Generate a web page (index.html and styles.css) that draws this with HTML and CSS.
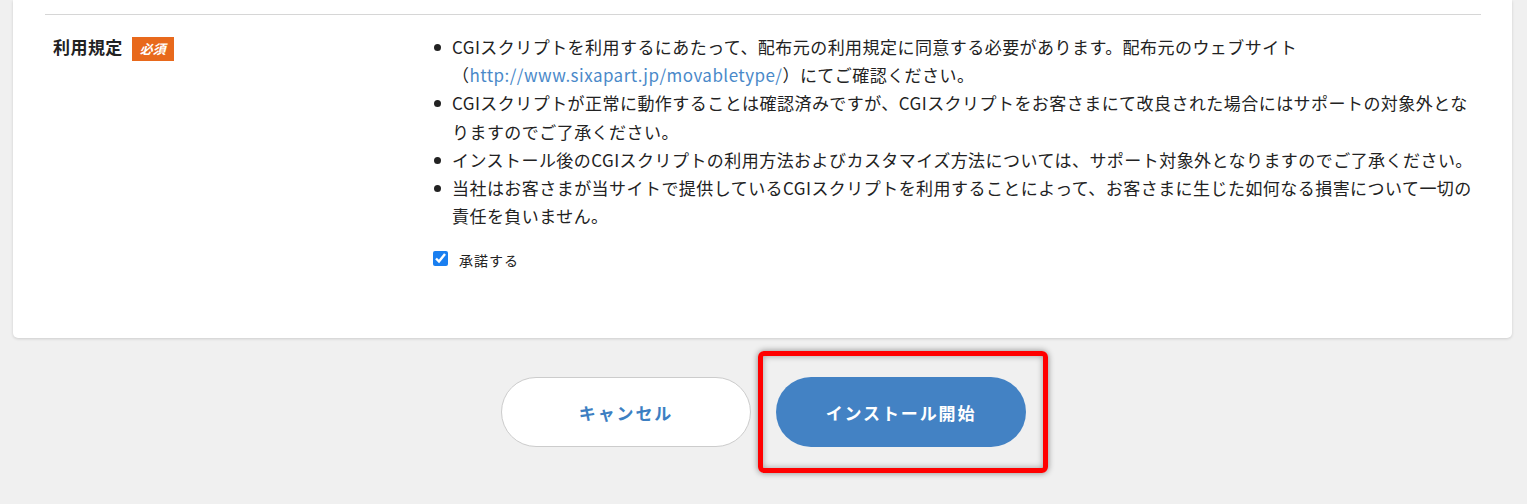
FILE: index.html
```html
<!DOCTYPE html>
<html lang="ja">
<head>
<meta charset="utf-8">
<title>CGIインストール</title>
<link rel="stylesheet" href="styles.css">
</head>
<body>
<div class="card">
  <div class="row">
    <div class="label-col">
      <span class="label">利用規定</span>
      <span class="badge">必須</span>
    </div>
    <div class="content-col">
      <ul class="terms">
        <li><span>CGIスクリプトを利用するにあたって、配布元の利用規定に同意する必要があります。配布元のウェブサイト（<a href="#" class="link">http://www.sixapart.jp/movabletype/</a>）にてご確認ください。</span></li>
        <li><span>CGIスクリプトが正常に動作することは確認済みですが、CGIスクリプトをお客さまにて改良された場合にはサポートの対象外となりますのでご了承ください。</span></li>
        <li><span>インストール後のCGIスクリプトの利用方法およびカスタマイズ方法については、サポート対象外となりますのでご了承ください。</span></li>
        <li><span>当社はお客さまが当サイトで提供しているCGIスクリプトを利用することによって、お客さまに生じた如何なる損害について一切の責任を負いません。</span></li>
      </ul>
      <label class="agree"><input type="checkbox" class="check" checked><span>承諾する</span></label>
    </div>
  </div>
</div>
<div class="actions">
  <button class="btn btn-cancel">キャンセル</button>
  <div class="highlight-wrap">
    <button class="btn btn-primary">インストール開始</button>
    <span class="highlight"></span>
  </div>
</div>
</body>
</html>
```
FILE: styles.css
```css
html, body {
  margin: 0;
  padding: 0;
}
body {
  background: #f0f0f0;
  font-family: "Noto Sans CJK JP", "Noto Sans", sans-serif;
  color: #222;
  height: 504px;
  overflow: hidden;
}
.card {
  margin: 0 15px 0 13px;
  background: #fff;
  border-radius: 0 0 5px 5px;
  box-shadow: 0 1px 3px rgba(0,0,0,0.15);
  padding: 14px 31px 70px 32px;
}
.row {
  border-top: 1px solid #d6d6d6;
  padding: 18px 0 0 8px;
  display: grid;
  grid-template-columns: 381px 1fr;
}
.label-col {
  display: flex;
  align-items: flex-start;
  gap: 9px;
}
.label {
  font-size: 17px;
  font-weight: bold;
  letter-spacing: 0.45px;
  line-height: 28px;
}
.badge {
  margin-top: 4px;
  height: 24px;
  line-height: 24px;
  padding: 0 8px;
  background: #e8691c;
  color: #fff;
  font-size: 13px;
  font-weight: bold;
  font-style: italic;
}
.terms {
  list-style: none;
  margin: 0;
  padding: 0;
  font-size: 17px;
  letter-spacing: 0.45px;
  line-height: 28.2px;
}
.terms li {
  display: flex;
}
.terms li::before {
  content: "";
  flex: none;
  width: 7px;
  height: 7px;
  border-radius: 50%;
  background: #222;
  margin: 11px 11px 0 0;
}
.link {
  color: #4a89c9;
  text-decoration: none;
}
.agree {
  margin-top: 18px;
  display: flex;
  align-items: center;
  gap: 11px;
  font-size: 14px;
  letter-spacing: 0.07em;
  height: 20px;
}
.agree span {
  padding-top: 3px;
}
.check {
  margin: 0 0 0 -1px;
  width: 15px;
  height: 15px;
  accent-color: #1a7ff0;
}
.actions {
  margin-top: 39px;
  display: flex;
  justify-content: center;
  gap: 25px;
}
.btn {
  width: 250px;
  height: 70px;
  border-radius: 35px;
  font-family: "Noto Sans CJK JP", "Noto Sans", sans-serif;
  font-size: 17px;
  font-weight: bold;
  letter-spacing: 0.11em;
  cursor: pointer;
}
.btn-cancel {
  background: #fff;
  border: 1px solid #cccccc;
  color: #3d7fc2;
}
.btn-primary {
  background: #4382c4;
  border: none;
  color: #fff;
  display: block;
}
.highlight-wrap {
  position: relative;
}
.highlight {
  position: absolute;
  left: -18px;
  right: -22px;
  top: -26px;
  bottom: -26px;
  border: 5px solid #ff0000;
  border-radius: 6px;
  box-shadow: 0 0 6px rgba(0,0,0,0.45), inset 0 0 6px rgba(0,0,0,0.35);
  pointer-events: none;
}
```
